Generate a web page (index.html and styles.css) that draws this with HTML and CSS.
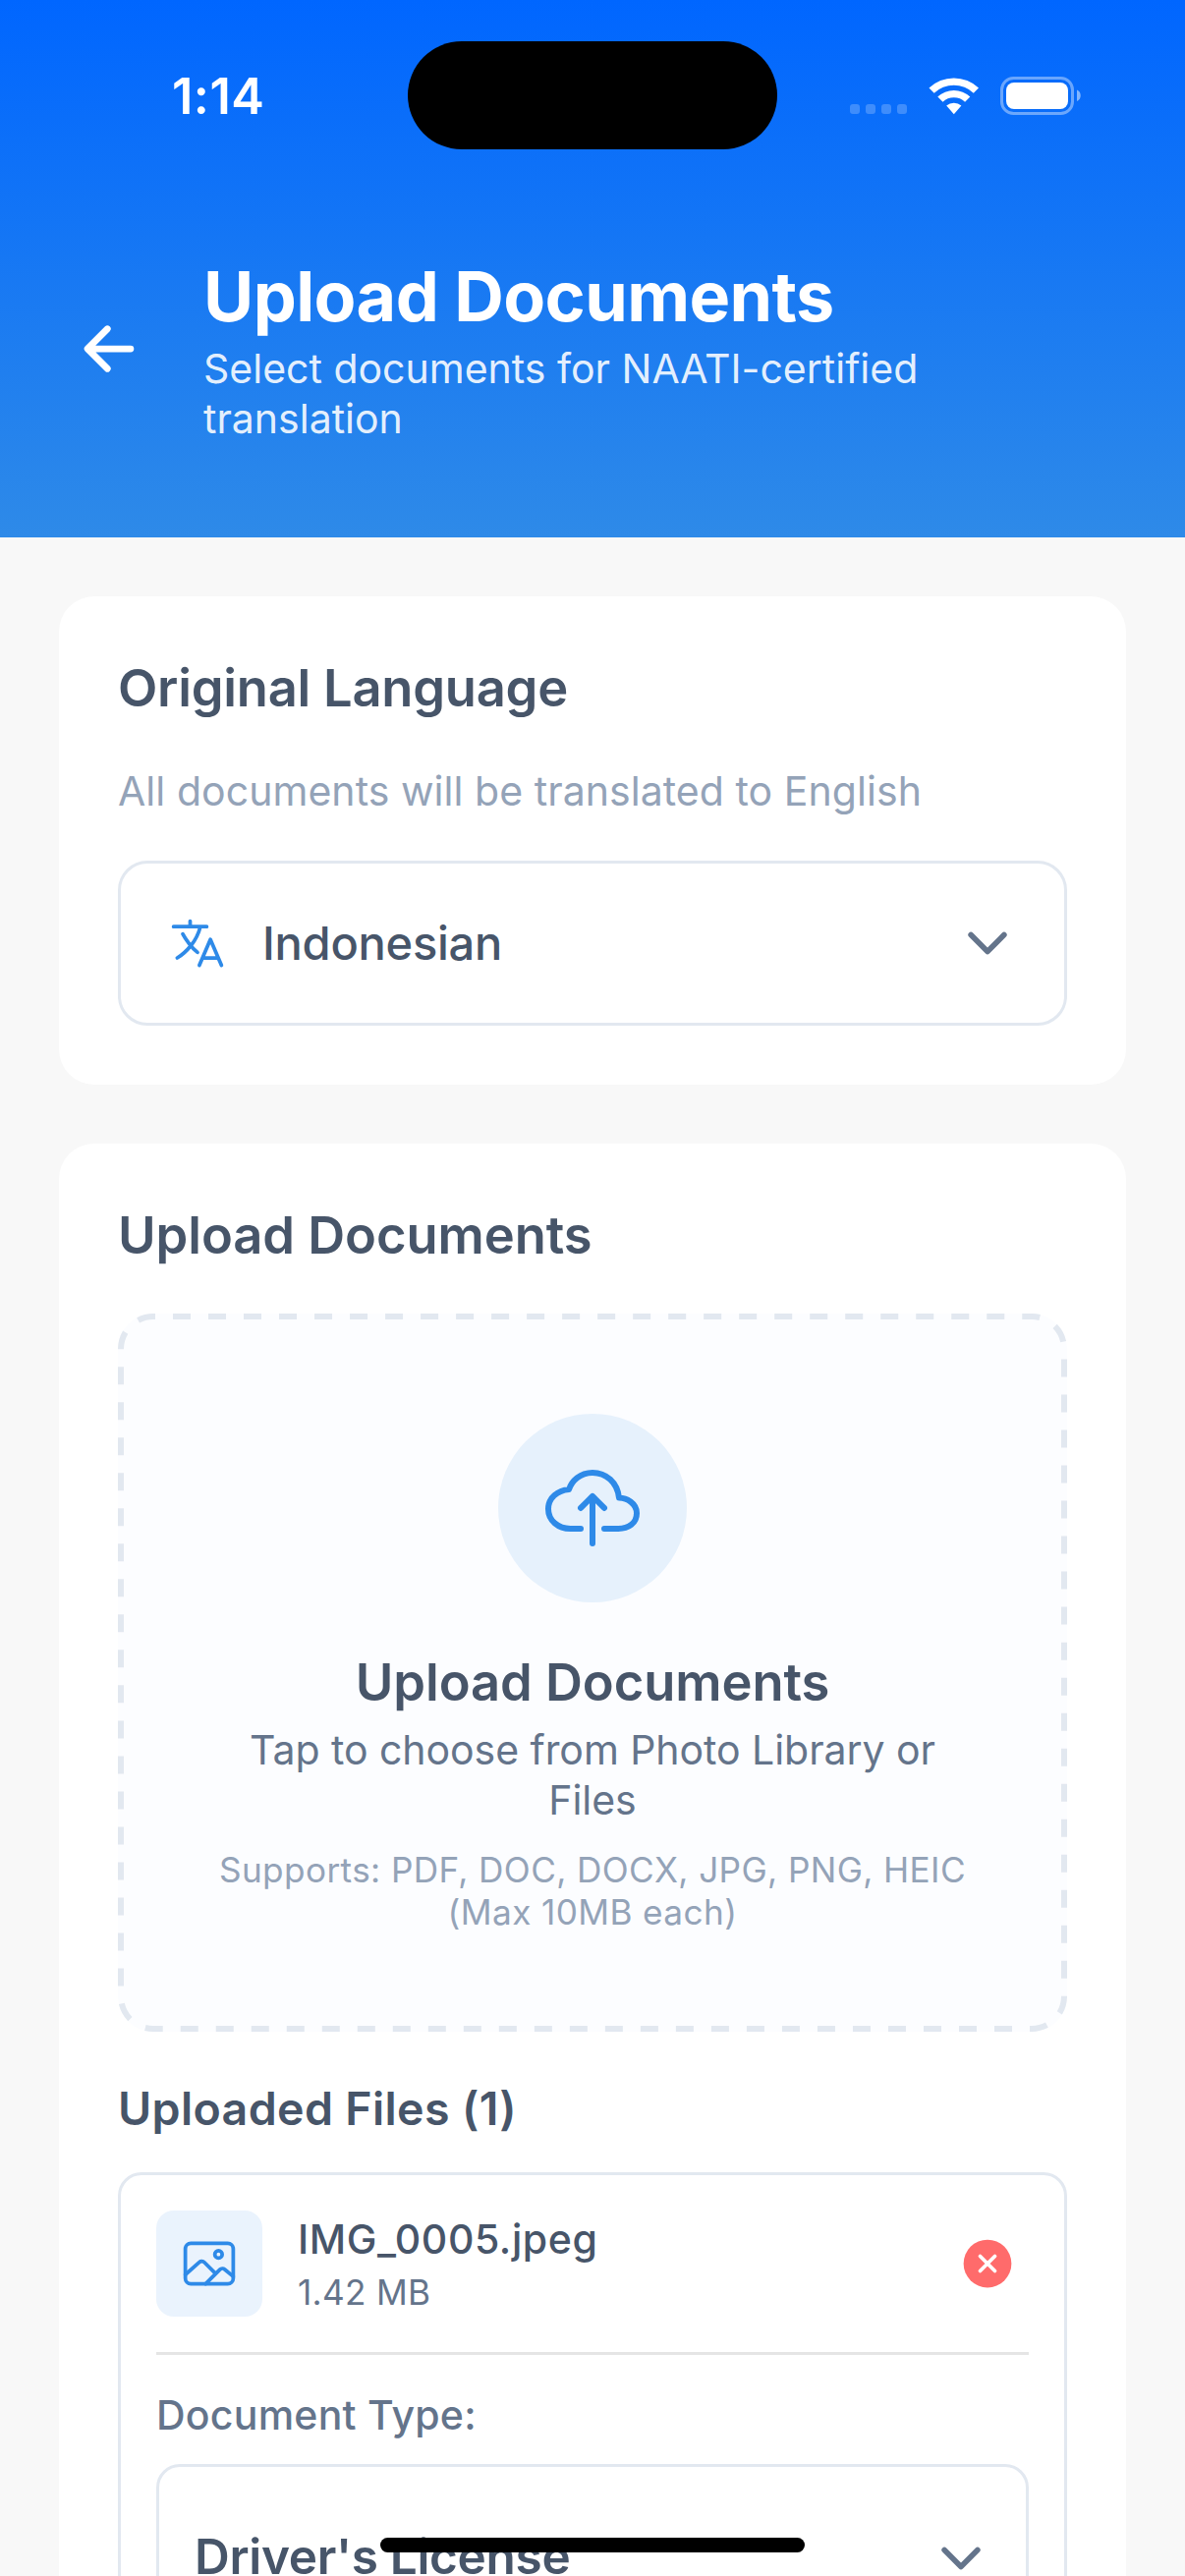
FILE: index.html
```html
<!DOCTYPE html>
<html lang="en">
<head>
<meta charset="utf-8">
<title>Upload Documents</title>
<link rel="stylesheet" href="styles.css">
</head>
<body>
<div class="screen">
  <header class="header">
    <div class="status">
      <span class="time">1:14</span>
      <span class="island"></span>
      <svg class="status-icons" viewBox="0 0 240 44" width="240" height="44">
        <g fill="#fff" fill-opacity=".22"><rect x="0" y="30" width="10" height="10" rx="3"/><rect x="16" y="30" width="10" height="10" rx="3"/><rect x="32" y="30" width="10" height="10" rx="3"/><rect x="48" y="30" width="10" height="10" rx="3"/></g>
        <g fill="#fff"><path d="M80.5 13.6a36.5 36.5 0 0 1 50.5 0l-5.2 5.2a29 29 0 0 0-40.1 0z"/><path d="M89.3 22.6a24 24 0 0 1 33 0l-5.2 5.2a16.6 16.6 0 0 0-22.6 0z"/><path d="M98.2 31.6a11.5 11.5 0 0 1 15.2 0l-7.6 8.6z"/></g>
        <rect x="154.500" y="3.500" width="72" height="36" rx="12" fill="none" stroke="#fff" stroke-opacity=".4" stroke-width="3"/>
        <rect x="159" y="8" width="63" height="27" rx="8" fill="#fff"/>
        <path d="M231 15.500c5 2 5 9.500 0 11.500z" fill="#fff" fill-opacity=".5"/>
      </svg>
    </div>
    <div class="nav">
      <svg class="back" viewBox="0 0 512 512"><path d="M244 400 100 256 244 112M120 256h292"/></svg>
      <div class="nav-text">
        <h1>Upload Documents</h1>
        <p>Select documents for NAATI-certified<br>translation</p>
      </div>
    </div>
  </header>

  <main class="content">
    <section class="card">
      <h2 class="language-title">Original Language</h2>
      <p class="hint">All documents will be translated to English</p>
      <div class="dropdown">
        <svg class="icon" viewBox="0 0 512 512"><path d="M48 112h288M192 64v48M272 448l96-224 96 224M301.500 384h133M281.300 112S257 206 199 277 80 384 80 384M256 336s-35-27-72-75-56-85-56-85"/></svg>
        <span class="value">Indonesian</span>
        <svg class="icon chevron" viewBox="0 0 512 512"><path d="M112 184l144 144 144-144"/></svg>
      </div>
    </section>

    <section class="card">
      <h2>Upload Documents</h2>
      <div class="dropzone">
        <svg class="dashes" viewBox="0 0 966 731"><rect x="3" y="3" width="960" height="725" rx="33" pathLength="3312"/></svg>
        <div class="badge"><svg viewBox="0 0 512 512"><path d="M320 367.790h76c55 0 100-29.210 100-83.600s-53-81.470-96-83.600c-8.890-85.060-71-136.800-144-136.800-69 0-113.440 45.790-128 91.200-60 5.700-112 43.880-112 106.400s54 106.400 120 106.400h56M320 255.790l-64-64-64 64M256 448.210V207.790"/></svg></div>
        <h2 class="zone-title">Upload Documents</h2>
        <p class="zone-text">Tap to choose from Photo Library or<br>Files</p>
        <p class="zone-note">Supports: PDF, DOC, DOCX, JPG, PNG, HEIC<br>(Max 10MB each)</p>
      </div>

      <h3>Uploaded Files (1)</h3>
      <article class="file">
        <div class="file-row">
          <div class="thumb"><svg class="icon" viewBox="0 0 512 512"><rect x="48" y="80" width="416" height="352" rx="48"/><circle cx="336" cy="176" r="32"/><path d="M304 335.790l-90.660-90.490a32 32 0 0 0-43.870-1.300L48 352M224 432l123.340-123.340a32 32 0 0 1 43.110-2L464 368"/></svg></div>
          <div class="meta">
            <div class="name">IMG_0005.jpeg</div>
            <div class="size">1.42 MB</div>
          </div>
          <svg class="remove" viewBox="0 0 512 512"><circle cx="256" cy="256" r="208"/><path d="M320 320 192 192M192 320l128-128"/></svg>
        </div>
        <div class="type">
          <div class="label">Document Type:</div>
          <div class="select">
            <span class="select-value">Driver's License</span>
            <svg class="icon chevron" viewBox="0 0 512 512"><path d="M112 184l144 144 144-144"/></svg>
          </div>
        </div>
      </article>
    </section>
  </main>
  <div class="home-indicator"></div>
</div>
</body>
</html>
```
FILE: styles.css
```css
* { box-sizing: border-box; }
body { margin: 0; background: #f8f8f8; font-family: Inter, "Liberation Sans", sans-serif; color: #475569; }
h1, h2, h3, p { margin: 0; }
svg { display: block; flex: none; }
.screen { position: relative; width: 1206px; height: 2622px; overflow: hidden; }

.header { height: 547px; color: #fff; background: linear-gradient(180deg, #06f 0%, #2e8ae8 100%); }
.status { display: grid; grid-template-columns: 415px 376px 1fr; align-items: start; height: 260px; padding-top: 42px; }
.time { justify-self: start; margin: 26px 0 0 175px; font-size: 50.5px; font-weight: 600; line-height: 60px; letter-spacing: .5px; }
.island { height: 110px; border-radius: 55px; background: #000; }
.status-icons { margin: 34px 0 0 74px; }
.nav { display: flex; align-items: center; gap: 60px; padding-left: 75px; }
.back { width: 72px; height: 72px; margin-bottom: 2px; fill: none; stroke: #fff; stroke-width: 48; stroke-linecap: round; stroke-linejoin: round; }
.nav h1 { margin-bottom: 6px; font-size: 70px; font-weight: 700; line-height: 84px; letter-spacing: -.58px; }
.nav p { font-size: 41px; line-height: 51px; color: rgba(255, 255, 255, .9); }

.content { display: flex; flex-direction: column; gap: 60px; padding: 60px; }
.card { padding: 60px; border-radius: 36px; background: #fff; }
h2 { font-size: 52.5px; font-weight: 600; line-height: 66px; letter-spacing: -.08px; }
.language-title { letter-spacing: -.25px; }
.hint { margin-top: 47px; font-size: 41px; line-height: 51px; letter-spacing: .05px; color: #94a3b8; }
.icon { width: 60px; height: 60px; fill: none; stroke: #2e8ae8; stroke-width: 32; stroke-linecap: round; stroke-linejoin: round; }
.chevron { margin-left: auto; stroke: #64748b; stroke-width: 48; }
.dropdown { display: flex; align-items: center; gap: 36px; height: 168px; margin-top: 45px; padding: 0 48px; border: 3px solid #e2e8f0; border-radius: 30px; }
.value { margin-bottom: 1px; font-size: 47px; font-weight: 500; line-height: 57px; letter-spacing: -.25px; }

.dropzone { position: relative; display: flex; flex-direction: column; align-items: center; height: 731px; margin-top: 47px; padding-top: 102px; border-radius: 36px; background: #fcfdff; text-align: center; }
.dashes { position: absolute; inset: 0; width: 966px; height: 731px; fill: none; stroke: #e2e8f0; stroke-width: 6; stroke-dasharray: 18 18; stroke-dashoffset: 16; }
.badge { display: grid; place-items: center; width: 192px; height: 192px; border-radius: 50%; background: #e6f1fc; }
.badge svg { width: 96px; height: 96px; fill: none; stroke: #2e8ae8; stroke-width: 32; stroke-linecap: round; stroke-linejoin: round; }
.zone-title { margin-top: 48px; }
.zone-text { margin-top: 11px; font-size: 41px; line-height: 51px; letter-spacing: -.05px; color: #64748b; }
.zone-note { margin-top: 24px; font-size: 35.2px; line-height: 43px; letter-spacing: .38px; color: #94a3b8; }

h3 { margin-top: 50px; font-size: 46.5px; font-weight: 600; line-height: 57px; letter-spacing: .36px; }
.file { height: 560px; margin-top: 36px; padding: 36px; border: 3px solid #e2e8f0; border-radius: 24px; }
.file-row { display: flex; align-items: center; gap: 36px; padding-bottom: 36px; border-bottom: 3px solid #e5e5e5; }
.thumb { display: grid; place-items: center; width: 108px; height: 108px; border-radius: 18px; background: #eaf3fd; }
.name { font-size: 41px; font-weight: 500; line-height: 51px; letter-spacing: .6px; }
.size { margin-top: 7px; font-size: 35.2px; line-height: 43px; letter-spacing: .3px; color: #64748b; }
.remove { width: 60px; height: 60px; margin: 0 12px 0 auto; fill: #ff6b6b; }
.remove path { fill: none; stroke: #fff; stroke-width: 32; stroke-linecap: round; }
.label { margin-top: 36px; font-size: 41px; font-weight: 500; line-height: 51px; letter-spacing: .25px; color: #64748b; }
.select { display: flex; align-items: center; height: 192px; margin-top: 24px; padding: 0 36px; border: 3px solid #e2e8f0; border-radius: 24px; }
.select-value { margin-bottom: 4px; font-size: 49.5px; font-weight: 600; line-height: 57px; letter-spacing: -.3px; }

.home-indicator { position: absolute; left: 387px; top: 2583px; width: 432px; height: 15px; border-radius: 8px; background: #000; }
```
